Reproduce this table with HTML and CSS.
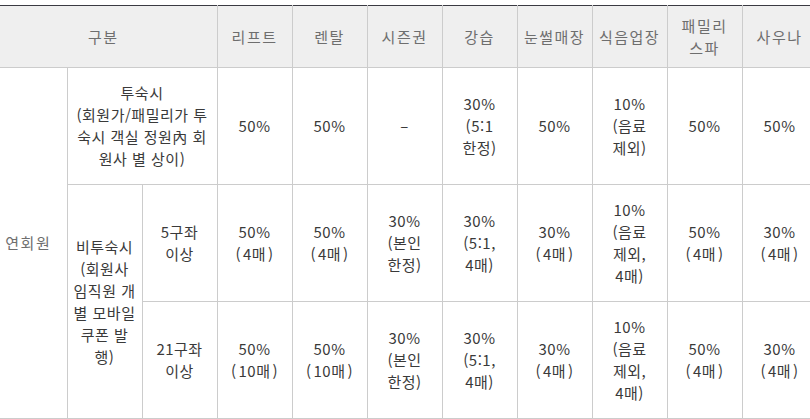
FILE: index.html
```html
<!DOCTYPE html>
<html lang="ko">
<head>
<meta charset="utf-8">
<title>연회원 혜택</title>
<link rel="stylesheet" href="styles.css">
</head>
<body>
<div class="wrap">
<table class="price">
  <colgroup>
    <col class="c-first">
    <col class="c-std"><col class="c-std">
    <col class="c-std"><col class="c-std"><col class="c-std"><col class="c-std">
    <col class="c-std"><col class="c-std"><col class="c-std"><col class="c-std">
  </colgroup>
  <thead>
    <tr class="r-head">
      <th colspan="3">구분</th>
      <th>리프트</th>
      <th>렌탈</th>
      <th>시즌권</th>
      <th>강습</th>
      <th>눈썰매장</th>
      <th>식음업장</th>
      <th>패밀리<br>스파</th>
      <th>사우나</th>
    </tr>
  </thead>
  <tbody>
    <tr class="r-body">
      <td rowspan="3" class="label">연회원</td>
      <td colspan="2">투숙시<br>(회원가/패밀리가 투<br>숙시 객실 정원內 회<br>원사 별 상이)</td>
      <td>50%</td>
      <td>50%</td>
      <td>–</td>
      <td>30%<br>(5:1<br>한정)</td>
      <td>50%</td>
      <td>10%<br>(음료<br>제외)</td>
      <td>50%</td>
      <td>50%</td>
    </tr>
    <tr class="r-body">
      <td rowspan="2">비투숙시<br>(회원사<br>임직원 개<br>별 모바일<br>쿠폰 발<br>행)</td>
      <td>5구좌<br>이상</td>
      <td>50%<br><span class="wp">(</span>4매<span class="wp">)</span></td>
      <td>50%<br><span class="wp">(</span>4매<span class="wp">)</span></td>
      <td>30%<br>(본인<br>한정)</td>
      <td>30%<br>(5:1,<br>4매)</td>
      <td>30%<br><span class="wp">(</span>4매<span class="wp">)</span></td>
      <td>10%<br>(음료<br>제외,<br>4매)</td>
      <td>50%<br><span class="wp">(</span>4매<span class="wp">)</span></td>
      <td>30%<br><span class="wp">(</span>4매<span class="wp">)</span></td>
    </tr>
    <tr class="r-body">
      <td>21구좌<br>이상</td>
      <td>50%<br><span class="wp">(</span>10매<span class="wp">)</span></td>
      <td>50%<br><span class="wp">(</span>10매<span class="wp">)</span></td>
      <td>30%<br>(본인<br>한정)</td>
      <td>30%<br>(5:1,<br>4매)</td>
      <td>30%<br><span class="wp">(</span>4매<span class="wp">)</span></td>
      <td>10%<br>(음료<br>제외,<br>4매)</td>
      <td>50%<br><span class="wp">(</span>4매<span class="wp">)</span></td>
      <td>30%<br><span class="wp">(</span>4매<span class="wp">)</span></td>
    </tr>
  </tbody>
</table>
</div>
</body>
</html>
```

FILE: styles.css
```css
html, body {
  margin: 0;
  padding: 0;
  background: #ffffff;
  overflow: hidden;
}

.wrap {
  padding-top: 5px;
  margin-left: -10px;
  width: 840px;
}

.price {
  border-collapse: collapse;
  table-layout: fixed;
  width: 827px;
  border-top: 1px solid #3a3a42;
  font-family: "Noto Sans CJK KR", "Noto Sans", sans-serif;
  font-size: 15px;
  letter-spacing: 0.5px;
  line-height: 22px;
  color: #3a3a3a;
}

.c-first { width: 77px; }
.c-std { width: 75px; }

.price th,
.price td {
  border: 1px solid #cccccc;
  padding: 0;
  text-align: center;
  vertical-align: middle;
  white-space: nowrap;
}

.price th {
  background: #efefef;
  color: #6e6e6e;
  font-weight: normal;
  letter-spacing: 1.5px;
  border-top: none;
}

.r-head th { height: 61px; }
.r-body td { height: 116px; }

.price td.label {
  color: #6e6e6e;
  letter-spacing: 1.5px;
  border-left: none;
}

.price th:first-child {
  border-left: none;
}

.wp {
  display: inline-block;
  padding: 0 2px;
}
```
